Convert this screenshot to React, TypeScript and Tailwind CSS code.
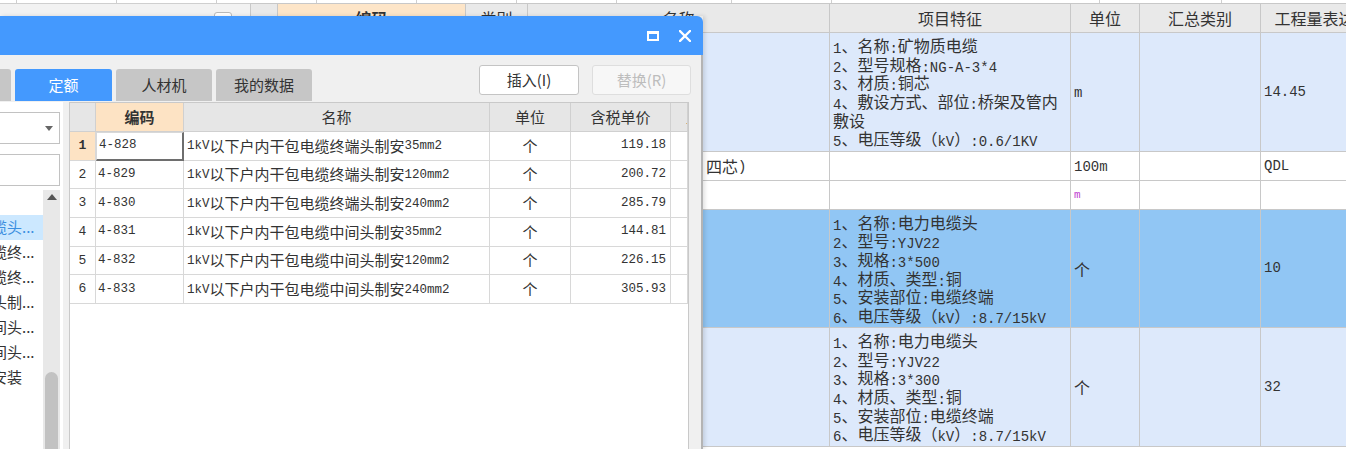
import React from 'react';

const mono = "[font-family:'Liberation_Mono',monospace]";

// splits a string so ASCII runs get the narrow mono face (like SimSun half-width glyphs)
function Mx({ t, cls }: { t: string; cls: string }) {
  const parts = t.split(/([\x20-\x7e]+)/);
  return (
    <>
      {parts.map((p, i) =>
        p === '' ? null : /^[\x20-\x7e]+$/.test(p) ? (
          <span key={i} className={`relative top-[1px] ${cls}`}>
            {p}
          </span>
        ) : (
          <span key={i}>{p}</span>
        ),
      )}
    </>
  );
}

const quotaRows = [
  ['4-828', '1kV以下户内干包电缆终端头制安35mm2', '119.18'],
  ['4-829', '1kV以下户内干包电缆终端头制安120mm2', '200.72'],
  ['4-830', '1kV以下户内干包电缆终端头制安240mm2', '285.79'],
  ['4-831', '1kV以下户内干包电缆中间头制安35mm2', '144.81'],
  ['4-832', '1kV以下户内干包电缆中间头制安120mm2', '226.15'],
  ['4-833', '1kV以下户内干包电缆中间头制安240mm2', '305.93'],
];

const treeItems = ['', '缆头...', '缆终...', '缆终...', '头制...', '间头...', '间头...', '安装'];

type BgRow = {
  h: string;
  bg: string;
  name?: string;
  lines: string[];
  unit?: string;
  purple?: boolean;
  qty?: string;
};

const bgRows: BgRow[] = [
  {
    h: 'h-[119px]',
    bg: 'bg-[#dde9fb]',
    lines: ['1、名称:矿物质电缆', '2、型号规格:NG-A-3*4', '3、材质:铜芯', '4、敷设方式、部位:桥架及管内', '敷设', '5、电压等级（kV）:0.6/1KV'],
    unit: 'm',
    qty: '14.45',
  },
  { h: 'h-[29px]', bg: 'bg-white', name: '四芯)', lines: [], unit: '100m', qty: 'QDL' },
  { h: 'h-[29px]', bg: 'bg-white', lines: [], unit: 'm', purple: true },
  {
    h: 'h-[118px]',
    bg: 'bg-[#91c6f4]',
    lines: ['1、名称:电力电缆头', '2、型号:YJV22', '3、规格:3*500', '4、材质、类型:铜', '5、安装部位:电缆终端', '6、电压等级（kV）:8.7/15kV'],
    unit: '个',
    qty: '10',
  },
  {
    h: 'h-[119px]',
    bg: 'bg-[#dde9fb]',
    lines: ['1、名称:电力电缆头', '2、型号:YJV22', '3、规格:3*300', '4、材质、类型:铜', '5、安装部位:电缆终端', '6、电压等级（kV）:8.7/15kV'],
    unit: '个',
    qty: '32',
  },
];

function BackgroundGrid() {
  const cell = 'border-r border-b border-[#c8c8c8] overflow-hidden';
  return (
    <div className="flex flex-col">
      <div className="flex h-[3px] bg-white">
        {[17, 100, 100, 100, 100, 100, 100, 115, 100, 268, 122].map((w, i) => (
          <div key={i} className="h-full border-r border-[#cfcfcf] shrink-0" style={{ width: w }} />
        ))}
      </div>
      <div className="flex">
        <div className="w-[250px] shrink-0 bg-[#f2f2f2] border-t border-[#cfcfcf]">
          <div className="ml-[214px] mt-[8px] w-[18px] h-[12px] rounded-[3px] border border-[#b9b9b9] bg-white" />
        </div>
        <div className="grid grid-cols-[27px_188px_62px_302px_241px_69px_121px_124px] border-t border-l border-[#c8c8c8] text-[16px]">
          <div className={`${cell} h-[29px] bg-[#e9e9e9]`} />
          <div className={`${cell} h-[29px] bg-[#fde5c8] flex items-center justify-center font-bold`}>编码</div>
          <div className={`${cell} h-[29px] bg-[#e9e9e9] flex items-center justify-center`}>类别</div>
          <div className={`${cell} h-[29px] bg-[#e9e9e9] flex items-center justify-center`}>名称</div>
          <div className={`${cell} h-[29px] bg-[#e9e9e9] flex items-center justify-center`}>项目特征</div>
          <div className={`${cell} h-[29px] bg-[#e9e9e9] flex items-center justify-center`}>单位</div>
          <div className={`${cell} h-[29px] bg-[#e9e9e9] flex items-center justify-center`}>汇总类别</div>
          <div className={`${cell} h-[29px] bg-[#e9e9e9] flex items-center justify-center whitespace-nowrap`}>工程量表达式</div>
          {bgRows.map((r, ri) => (
            <React.Fragment key={ri}>
              <div className={`${cell} ${r.h} ${r.bg}`} />
              <div className={`${cell} ${r.h} ${r.bg}`} />
              <div className={`${cell} ${r.h} ${r.bg}`} />
              <div className={`${cell} ${r.h} ${r.bg} flex items-center pl-[178px] whitespace-nowrap`}>
                {r.name ? <Mx t={r.name} cls={`${mono} text-[14px]`} /> : null}
              </div>
              <div className={`${cell} ${r.h} ${r.bg} flex flex-col justify-center pl-[3px]`}>
                {r.lines.map((l, li) => (
                  <div key={li} className="h-[18.6px] leading-[18.6px] whitespace-nowrap">
                    <Mx t={l} cls={`${mono} text-[14px]`} />
                  </div>
                ))}
              </div>
              <div className={`${cell} ${r.h} ${r.bg} flex items-center pl-[3px]`}>
                {r.unit ? (
                  r.purple ? (
                    <span className={`${mono} text-[11px] text-[#c040d0]`}>{r.unit}</span>
                  ) : (
                    <Mx t={r.unit} cls={`${mono} text-[14px]`} />
                  )
                ) : null}
              </div>
              <div className={`${cell} ${r.h} ${r.bg}`} />
              <div className={`${cell} ${r.h} ${r.bg} flex items-center pl-[3px]`}>
                {r.qty ? <span className={`${mono} text-[14px]`}>{r.qty}</span> : null}
              </div>
            </React.Fragment>
          ))}
        </div>
      </div>
    </div>
  );
}

function QuotaDialog() {
  const hd = 'h-[29px] border-r border-b border-[#d0d0d0] flex items-center justify-center overflow-hidden';
  const td = 'border-r border-b border-[#d8d8d8] flex items-center overflow-hidden whitespace-nowrap';
  return (
    <div className="absolute left-0 top-[16px] bottom-0 w-[703px] flex flex-col shadow-[2px_0_4px_rgba(0,0,0,0.12)]">
      {/* title bar */}
      <div className="h-[39px] shrink-0 bg-[#4499fe] rounded-tr-[6px] flex items-center justify-end gap-[20px] pr-[12px]">
        <div className="w-[12px] h-[10px] border-2 border-t-[3px] border-white" />
        <svg width="12" height="12" viewBox="0 0 12 12">
          <path d="M1 1L11 11M11 1L1 11" stroke="white" strokeWidth="2.3" strokeLinecap="square" />
        </svg>
      </div>

      <div className="flex-1 flex flex-col bg-[#f0f0f0] border-r-2 border-[#b4b4b4] text-[15px]">
        {/* tabs + actions */}
        <div className="h-[46px] shrink-0 flex">
          <div className="flex items-end gap-[4px]">
            <div className="w-[11px] h-[32px] bg-[#c6c6c6] rounded-tr-[3px]" />
            <div className="w-[97px] h-[32px] bg-[#4499fe] rounded-t-[3px] text-white flex items-center justify-center">定额</div>
            <div className="w-[96px] h-[32px] bg-[#c6c6c6] rounded-t-[3px] flex items-center justify-center">人材机</div>
            <div className="w-[96px] h-[32px] bg-[#c6c6c6] rounded-t-[3px] flex items-center justify-center">我的数据</div>
          </div>
          <div className="ml-auto mt-[10px] flex gap-[13px] pr-[10px]">
            <button className="w-[100px] h-[30px] bg-white border border-[#c4c4c4] rounded-[3px] text-[#333]">插入(I)</button>
            <button className="w-[99px] h-[30px] bg-[#f7f7f7] border border-[#dedede] rounded-[3px] text-[#bdbdbd]">替换(R)</button>
          </div>
        </div>

        {/* content */}
        <div className="flex-1 flex pt-px min-h-0">
          <div className="w-[63px] shrink-0 bg-white flex flex-col overflow-hidden pt-[10px]">
            <div className="-ml-[4px] w-[64px] h-[32px] shrink-0 border border-[#c2c2c2] bg-white flex items-center justify-end pr-[6px]">
              <svg width="8" height="5" viewBox="0 0 8 5">
                <path d="M0 0H8L4 5Z" fill="#666" />
              </svg>
            </div>
            <div className="-ml-[4px] mt-[10px] w-[64px] h-[32px] shrink-0 border border-[#c2c2c2] bg-white" />
            <div className="flex flex-1 mt-[4px] min-h-0">
              <div className="w-[43px] shrink-0">
                {treeItems.map((t, i) => (
                  <div
                    key={i}
                    className={`h-[25px] flex items-center whitespace-nowrap overflow-hidden ${
                      i === 1 ? 'bg-[#cce8ff] text-[#3b8fe0]' : 'text-[#333]'
                    }`}
                  >
                    <span className="-ml-[8px]">{t}</span>
                  </div>
                ))}
              </div>
              <div className="w-[17px] shrink-0 bg-[#e8e8e8] flex flex-col items-center">
                <svg width="10" height="6" viewBox="0 0 10 6" className="mt-[4px]">
                  <path d="M0 6H10L5 0Z" fill="#555" />
                </svg>
                <div className="mt-[172px] w-[13px] h-[120px] rounded-full bg-[#c2c2c2]" />
              </div>
            </div>
          </div>

          <div className="ml-[6px] w-[620px] shrink-0 bg-white border border-[#c9c9c9] overflow-hidden">
            <div className="grid grid-cols-[26px_88px_306px_81px_100px_17px]">
              <div className={`${hd} bg-[#e6e6e6]`} />
              <div className={`${hd} bg-[#fde3c4] font-bold`}>编码</div>
              <div className={`${hd} bg-[#e6e6e6]`}>名称</div>
              <div className={`${hd} bg-[#e6e6e6]`}>单位</div>
              <div className={`${hd} bg-[#e6e6e6]`}>含税单价</div>
              <div className={`${hd} bg-[#e6e6e6] justify-start pl-[15px] whitespace-nowrap`}>工</div>
              {quotaRows.map(([code, name, price], i) => (
                <React.Fragment key={code}>
                  <div
                    className={`${td} h-[28.67px] justify-center ${mono} text-[13px] ${
                      i === 0 ? 'bg-[#fde3c4] font-bold' : 'bg-white'
                    }`}
                  >
                    {i + 1}
                  </div>
                  <div
                    className={`${td} h-[28.67px] pl-[2px] ${mono} text-[12.5px] ${
                      i === 0 ? 'border-l border-t border-[#6f9bd6] border-r-2 border-b-2 border-r-[#6e6e6e] border-b-[#6e6e6e]' : ''
                    }`}
                  >
                    {code}
                  </div>
                  <div className={`${td} h-[28.67px] pl-[3px]`}>
                    <Mx t={name} cls={`${mono} text-[12.5px]`} />
                  </div>
                  <div className={`${td} h-[28.67px] justify-center`}>个</div>
                  <div className={`${td} h-[28.67px] justify-end pr-[4px] ${mono} text-[12.5px]`}>{price}</div>
                  <div className={`${td} h-[28.67px]`} />
                </React.Fragment>
              ))}
            </div>
          </div>
        </div>
      </div>
    </div>
  );
}

export default function App() {
  return (
    <div className="relative h-[449px] w-[1346px] overflow-hidden bg-white text-[#333] [font-family:'Noto_Sans_CJK_SC','Noto_Sans',sans-serif]">
      <BackgroundGrid />
      <QuotaDialog />
    </div>
  );
}
